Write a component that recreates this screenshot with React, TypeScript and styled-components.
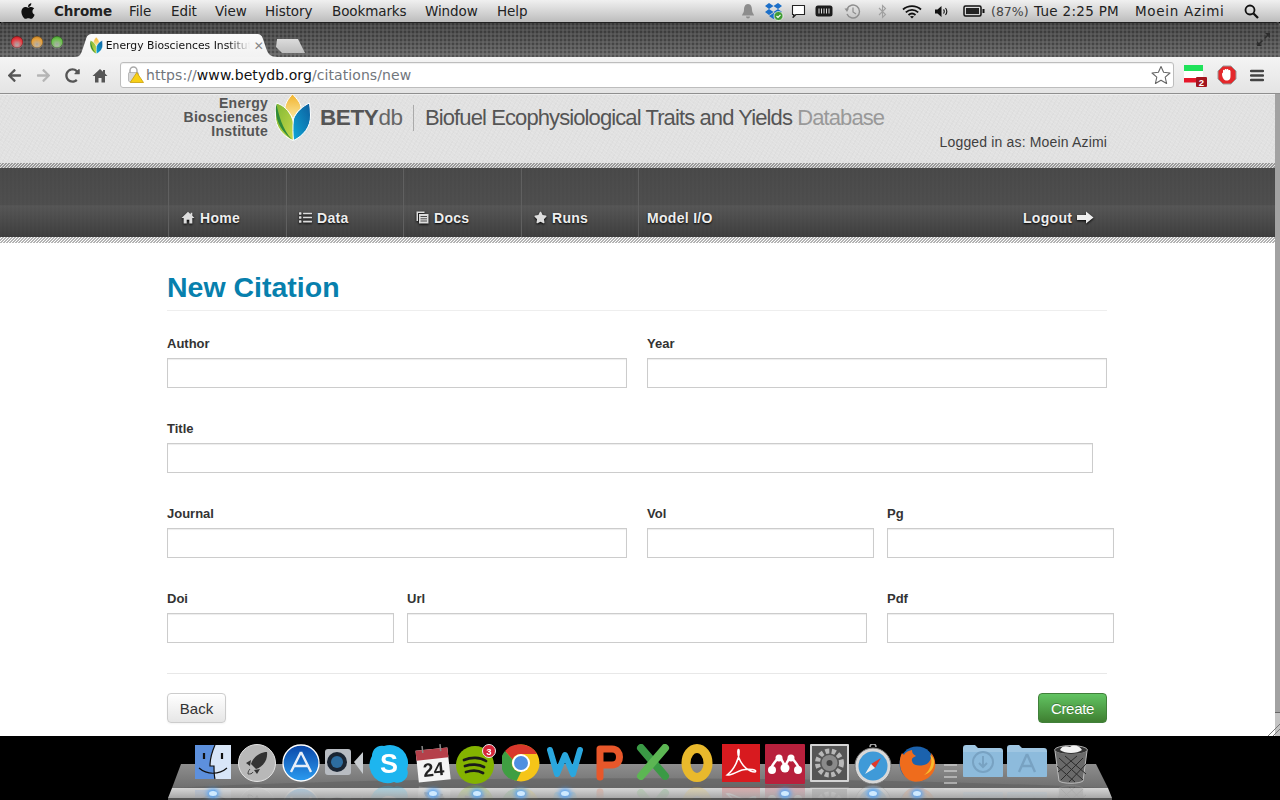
import React from "react";
import styled, { createGlobalStyle } from "styled-components";
import { FaApple, FaList, FaStar, FaArrowLeft, FaArrowRight, FaRedoAlt } from "react-icons/fa";

const Global = createGlobalStyle`
  html, body { margin: 0; padding: 0; width: 1280px; height: 800px; overflow: hidden; background: #000; }
  * { box-sizing: border-box; }
`;

const Screen = styled.div`
  width: 1280px; height: 800px; display: flex; flex-direction: column; overflow: hidden; background: #000;
  font-family: "Liberation Sans", Arial, sans-serif;
`;

const MenuBar = styled.div`
  height: 22px; flex: none; display: flex; align-items: center; padding-left: 19px;
  background: linear-gradient(#f0f0f0, #dcdcdc 40%, #bcbcbc);
  font-family: "DejaVu Sans", sans-serif; font-size: 13.5px; color: #222; letter-spacing: -0.1px;
`;
const AppleSlot = styled.span`width: 35px; height: 22px; display: flex; align-items: center; font-size: 18px; color: #111; flex: none;`;
const MenuItem = styled.span<{ $bold?: boolean; $w: number }>`
  width: ${p => p.$w}px; flex: none; font-weight: ${p => (p.$bold ? 700 : 400)}; white-space: nowrap;
`;
const Status = styled.div`margin-left: auto; display: flex; align-items: center; height: 22px; padding-right: 19px;`;
const StatusSlot = styled.span<{ $w: number }>`width: ${p => p.$w}px; flex: none; display: flex; justify-content: center; align-items: center;`;
const StatusText = styled.span<{ $w: number; $light?: boolean; $track: number }>`
  width: ${p => p.$w}px; flex: none; white-space: nowrap; font-size: ${p => (p.$light ? 12.5 : 13.5)}px; color: ${p => (p.$light ? "#444" : "#222")};
  letter-spacing: ${p => p.$track}px;
`;

const Browser = styled.div`
  height: 714px; flex: none; display: flex; flex-direction: column; overflow: hidden; border-radius: 4px 4px 0 0; background: #fff;
  position: relative;
`;
const TabStrip = styled.div`
  height: 35px; flex: none; display: flex; align-items: flex-end; position: relative;
  border-top: 1px solid #222;
  background:
    radial-gradient(circle at 1px 1px, rgba(0,0,0,.24) .8px, transparent 1.1px) 0 0 / 4px 4px,
    radial-gradient(circle at 3px 3px, rgba(255,255,255,.06) .8px, transparent 1.1px) 0 0 / 4px 4px,
    linear-gradient(#484848, #5a5a5a 60%, #6c6c6c);
`;
const Lights = styled.div`display: flex; gap: 8px; padding: 0 0 9px 11px; width: 80px; flex: none; align-self: flex-end;`;
const Light = styled.span<{ $c: string; $d: string }>`
  width: 12px; height: 12px; border-radius: 50%; flex: none;
  background: radial-gradient(circle at 50% 72%, #fff8 0, ${p => p.$c} 55%, ${p => p.$d} 100%);
  box-shadow: inset 0 0 0 .5px #0006, 0 1px 0 #fff3;
`;
const Tab = styled.div`
  width: 203px; height: 23px; flex: none; display: flex; align-items: center; padding: 0 0 0 15px; margin-left: -5px;
  background: linear-gradient(#fbfbfb, #f2f2f2);
  clip-path: path("M0 23 C5 23 6 20 8 14 L11 5 C12 2 13 0 18 0 L181 0 C186 0 187 2 188 5 L191 14 C193 20 195 23 203 23 Z");
  font-family: "DejaVu Sans", sans-serif; font-size: 10.8px; color: #111;
`;
const TabTitle = styled.span`
  width: 144px; margin-left: 3px; overflow: hidden; white-space: nowrap; flex: none;
  -webkit-mask-image: linear-gradient(90deg, #000 85%, transparent);
`;
const TabClose = styled.span`margin-left: 4px; font-size: 12px; color: #888; font-weight: 700;`;
const NewTab = styled.div`
  width: 31px; height: 14px; margin: 0 0 4px -4px; flex: none;
  background: linear-gradient(#dcdcdc, #bdbdbd);
  clip-path: polygon(3px 0, 24px 0, 31px 14px, 8px 14px, 2px 8px);
`;
const FullScreen = styled.span`margin-left: auto; align-self: flex-start; padding: 9px 9px 0 0; display: flex;`;

const Toolbar = styled.div`
  height: 37px; flex: none; display: flex; align-items: center;
  background: linear-gradient(#f4f4f4, #e4e4e4);
  border-bottom: 1px solid #8f8f8f;
`;
const ToolButton = styled.span<{ $w: number; $c?: string }>`
  width: ${p => p.$w}px; flex: none; display: flex; justify-content: center; color: ${p => p.$c || "#555"}; font-size: 15px;
`;
const Omnibox = styled.div`
  width: 1054px; height: 26px; flex: none; display: flex; align-items: center; background: #fff; border: 1px solid #bdbdbd; border-radius: 3px;
  box-shadow: inset 0 1px 1px #0001; padding: 0 1px 0 6px; margin-left: 6px;
  font-family: "DejaVu Sans", sans-serif; font-size: 14px;
`;
const Url = styled.span`margin-left: 2px; color: #71767c; white-space: nowrap; letter-spacing: 0.08px;`;
const UrlHost = styled.span`color: #111;`;
const StarSlot = styled.span`margin-left: auto; width: 21px; display: flex;`;

const Page = styled.div`flex: 1; display: flex; flex-direction: column; min-height: 0; background: #fff; position: relative;`;
const Header = styled.header`
  height: 74px; flex: none; position: relative;
  background:
    repeating-linear-gradient(37deg, rgba(255,255,255,.12) 0 1px, transparent 1px 3px),
    repeating-linear-gradient(-61deg, rgba(0,0,0,.018) 0 1px, transparent 1px 4px),
    #e1e1e1;
  border-top: 1px solid #eee;
`;
const HeaderInner = styled.div`display: flex; align-items: flex-start; padding-left: 167px; height: 68px;`;
const Eb = styled.div`
  width: 101px; flex: none; text-align: right; font-weight: 700; font-size: 14px; line-height: 14px; color: #555; padding-top: 1px; letter-spacing: 0.25px;
`;
const LogoSlot = styled.span`margin: -2px 0 0 7px; width: 36px; height: 48px; flex: none; display: flex;`;
const Brand = styled.div`
  margin-left: 9px; margin-top: 10px; display: flex; align-items: center; height: 26px; white-space: nowrap; font-size: 22px; letter-spacing: -0.9px; color: #555;
`;
const BrandName = styled.span`font-size: 22.5px; letter-spacing: -0.4px; width: 82px; flex: none;`;
const BrandStrong = styled.b`font-weight: 700;`;
const BrandLight = styled.span`color: #666; font-weight: 400;`;
const BrandRule = styled.span`width: 1px; height: 26px; background: #aaa; margin: 0 11px; flex: none;`;
const BrandMuted = styled.span`color: #999;`;
const Logged = styled.div`
  position: absolute; right: 173px; top: 39px; font-size: 14px; letter-spacing: .16px; color: #3f3f3f; white-space: nowrap;
`;
const Hatch = styled.div<{ $h: number; $bg: string; $fg: string }>`
  height: ${p => p.$h}px; flex: none;
  background: repeating-linear-gradient(135deg, ${p => p.$fg} 0 1.0607px, ${p => p.$bg} 1.0607px 2.1213px);
`;
const Nav = styled.nav`
  height: 69px; flex: none; display: flex; align-items: flex-end; padding-left: 168px;
  background:
    repeating-linear-gradient(90deg, rgba(255,255,255,.012) 0 2px, transparent 2px 4px),
    linear-gradient(#484848 0, #4d4d4d 54%, #555 54.5%, #3d3d3d 100%);
`;
const NavItem = styled.a<{ $w: number; $pad: number; $ruled?: boolean }>`
  width: ${p => p.$w}px; height: 69px; flex: none; display: flex; align-items: flex-end; gap: 5px; padding: 0 0 11px ${p => p.$pad}px;
  border-left: ${p => (p.$ruled ? "1px solid #606060" : "none")};
  color: #eee; font-weight: 700; font-size: 14px; line-height: 16px; letter-spacing: .3px; text-shadow: 0 1px 2px #000; white-space: nowrap;
  svg { margin-bottom: 2px; filter: drop-shadow(0 1px 1px #000); color: #ddd; flex: none; }
`;
const Main = styled.main`flex: 1; padding: 27px 0 0 167px; min-height: 0;`;
const Title = styled.h1`
  margin: 0; width: 940px; height: 41px; border-bottom: 1px solid #eee; font-size: 28.5px; line-height: 34px; font-weight: 700; color: #0780ad;
`;
const Form = styled.form`margin-top: 22px; width: 940px;`;
const Row = styled.div`display: flex; margin-bottom: 30px;`;
const Field = styled.label<{ $w: number; $right: number }>`
  width: ${p => p.$w}px; margin-right: ${p => p.$right}px; flex: none; display: block;
`;
const FieldName = styled.span`display: block; height: 25px; font-size: 13px; line-height: 22px; font-weight: 700; color: #333;`;
const Input = styled.input`
  display: block; width: 100%; height: 30px; border: 1px solid #ccc; border-radius: 0; background: #fff; padding: 4px 6px; margin: 0;
  box-shadow: inset 0 1px 1px rgba(0,0,0,.075); outline: none;
`;
const Rule = styled.hr`margin: 0 0 19px; border: 0; border-top: 1px solid #e8e8e8; width: 940px;`;
const Actions = styled.div`display: flex; justify-content: space-between; width: 940px;`;
const Back = styled.button`
  width: 59px; height: 30px; border: 1px solid #ccc; border-radius: 4px; background: linear-gradient(#fff, #e6e6e6);
  font: 15px "Liberation Sans", Arial, sans-serif; color: #333; padding: 0; box-shadow: inset 0 1px 0 #fff, 0 1px 2px #0000000d;
`;
const Create = styled.button`
  width: 69px; height: 30px; border: 1px solid #41803a; border-radius: 4px; background: linear-gradient(#62c462, #3f7f31);
  font: 15px "Liberation Sans", Arial, sans-serif; color: #fff; padding: 0; text-shadow: 0 -1px 0 #0004; letter-spacing: -.3px;
`;
const Gutter = styled.div`
  position: absolute; top: 0; right: 0; bottom: 0; width: 5px; background: linear-gradient(#a2a2a2 0, #a2a2a2 618px, #666 618px, #666 619px, #c4c4c4 619px);
`;
const Grip = styled.svg`position: absolute; right: 0; bottom: 0;`;

const Dock = styled.div`height: 64px; flex: none; position: relative; background: #000; overflow: hidden;`;
const Shelf = styled.svg`position: absolute; left: 0; top: 0;`;
const DockRow = styled.div`position: relative; display: flex; padding: 8px 0 0 191px; align-items: flex-start;`;
const DockSlot = styled.div<{ $running?: boolean }>`
  width: 44px; height: 40px; flex: none; display: flex; justify-content: center; position: relative;
  -webkit-box-reflect: below 1px linear-gradient(transparent 62%, rgba(255,255,255,.28));
  &::after {
    content: ""; display: ${p => (p.$running ? "block" : "none")}; position: absolute; left: 18px; top: 47px; width: 8px; height: 5px; border-radius: 50%;
    background: #cfeaff; box-shadow: 0 0 5px 2px #4aa3ff;
  }
`;
const DockGap = styled.div`width: 22px; height: 30px; flex: none; margin-top: 20px; display: flex; flex-direction: column; gap: 4px; align-items: center;
  span { width: 13px; height: 2px; background: #d5d5d5; opacity: .6; }
`;

const Leaf = ({ size }: { size: number }) => (
  <svg width={size * 0.75} height={size} viewBox="0 0 36 48">
    <defs>
      <linearGradient id="ly" x1="0" y1="0" x2="0" y2="1"><stop offset="0" stopColor="#f1b22c" /><stop offset="1" stopColor="#fbe9a0" /></linearGradient>
      <linearGradient id="lb" x1="1" y1="0" x2="0" y2="1"><stop offset="0" stopColor="#0d5d9d" /><stop offset="1" stopColor="#0ea8d8" /></linearGradient>
      <linearGradient id="lg" x1="0" y1="0" x2="1" y2="1"><stop offset="0" stopColor="#7fb734" /><stop offset="1" stopColor="#c8d94a" /></linearGradient>
    </defs>
    <path d="M17.500 1C13 6 10 11 10 15 13 18 16 22 18 26 20 22 23 18 26 15 26 10 22 6 17.500 1Z" fill="url(#ly)" stroke="#fff" strokeWidth="1" />
    <path d="M1.300 10C8 12 14 17 17.500 26 20 34 19 42 18 47.500 8 43 0 34 .5 22 .5 18 1 14 1.300 10Z" fill="url(#lg)" stroke="#fff" strokeWidth="1" />
    <path d="M1.300 11C0 20 1 34 17 46.500 7 36 4 22 1.300 11Z" fill="#2f8a3a" />
    <path d="M34.500 10C28 13 21 19 18.500 26 17.500 34 18 42 18.500 47.500 28 43 36 34 35.500 22 35.500 18 35 14 34.500 10Z" fill="url(#lb)" stroke="#fff" strokeWidth="1" />
  </svg>
);

const BellIcon = () => (<svg width="14" height="16" viewBox="0 0 14 16"><path d="M7 1C4 1 3 4 3 7 3 10 1 11 1 12.500L13 12.500C13 11 11 10 11 7 11 4 10 1 7 1ZM5 13.500C5 16 9 16 9 13.500Z" fill="#8d8d8d" /></svg>);
const DropboxIcon = () => (<svg width="20" height="19" viewBox="0 0 20 19"><path d="M5 1 9.500 4 5 7 1 4ZM14 1 18 4 14 7 9.500 4ZM5 7 9.500 10 5 13 1 10ZM14 7 18 10 14 13 9.500 10ZM5 14 9.500 11 14 14 9.500 17Z" fill="#1b6fc9" /><circle cx="14.500" cy="14" r="4.500" fill="#3f9b34" stroke="#fff" strokeWidth=".7" /><path d="M12.500 14 14 15.500 16.500 12.800" fill="none" stroke="#fff" strokeWidth="1.200" /></svg>);
const ChatIcon = () => (<svg width="15" height="15" viewBox="0 0 15 15"><path d="M1.500 1.500H13.500V10.500H5L2 13.500 3 10.500H1.500Z" fill="#fff" stroke="#222" strokeWidth="1.100" strokeLinejoin="round" /></svg>);
const RamIcon = () => (<svg width="18" height="12" viewBox="0 0 18 12"><rect x=".5" y=".5" width="17" height="11" rx="2.500" fill="#1c1c1c" /><path d="M4 3.500V8.500M6.500 3.500V8.500M9 3.500V8.500M11.500 3.500V8.500M14 3.500V8.500" stroke="#ddd" /></svg>);
const ClockIcon = () => (<svg width="17" height="17" viewBox="0 0 17 17"><path d="M3 6A6.500 6.500 0 1 1 3 11" fill="none" stroke="#8e8e8e" strokeWidth="1.400" /><path d="M.5 5.500H5L3 9Z" fill="#8e8e8e" /><path d="M9 4.500V9L12 11" fill="none" stroke="#8e8e8e" strokeWidth="1.200" /></svg>);
const BluetoothIcon = () => (<svg width="9" height="15" viewBox="0 0 9 15"><path d="M1 4 7.500 10.500 4.500 13.500V1.500L7.500 4.500 1 11" fill="none" stroke="#a0a0a0" strokeWidth="1.100" /></svg>);
const WifiIcon = () => (<svg width="20" height="15" viewBox="0 0 20 15"><path d="M1 5.500C6 1 14 1 19 5.500M3.800 8.300C7.500 5 12.500 5 16.200 8.300M6.500 11C8.500 9.300 11.500 9.300 13.500 11" fill="none" stroke="#111" strokeWidth="1.800" /><path d="M10 14.500 8 12.500C9 11.800 11 11.800 12 12.500Z" fill="#111" /></svg>);
const VolumeIcon = () => (<svg width="15" height="13" viewBox="0 0 15 13"><path d="M1 4.500H3.500L7.500 1V12L3.500 8.500H1Z" fill="#111" /><path d="M9.500 4.500C10.500 5.500 10.500 7.500 9.500 8.500M11.500 3C13 5 13 8 11.500 10" fill="none" stroke="#111" strokeWidth="1.100" /></svg>);
const BatteryIcon = () => (<svg width="22" height="12" viewBox="0 0 22 12"><rect x="1" y="1" width="17" height="10" rx="1.500" fill="none" stroke="#111" strokeWidth="1.500" /><rect x="3" y="3" width="13" height="6" fill="#222" /><rect x="19.500" y="4" width="2" height="4" fill="#111" /></svg>);
const SearchIcon = () => (<svg width="15" height="15" viewBox="0 0 15 15"><circle cx="6" cy="6" r="4.500" fill="none" stroke="#111" strokeWidth="1.800" /><path d="M9.500 9.500 14 14" stroke="#111" strokeWidth="2.300" /></svg>);
const ExpandIcon = () => (<svg width="15" height="15" viewBox="0 0 15 15"><path d="M9 1H14V6ZM1 9V14H6Z" fill="#2d2d2d" /><path d="M13 2 8.500 6.500M2 13 6.500 8.500" stroke="#2d2d2d" strokeWidth="1.500" /></svg>);
const HomeGlyph = ({ w, h }: { w: number; h: number }) => (<svg width={w} height={h} viewBox="0 0 16 15"><path d="M8 1 .5 8H3V14.500H6.500V10H9.500V14.500H13V8H15.500L13 5.600V2H11V3.800Z" fill="currentColor" /></svg>);
const DocsGlyph = () => (<svg width="13" height="13" viewBox="0 0 13 13"><path d="M.5 .5H8.500V2H2V10H.5Z" fill="currentColor" /><rect x="3" y="3" width="9.500" height="9.500" fill="currentColor" /><path d="M4.500 5.500H11M4.500 7.800H11M4.500 10H11" stroke="#4a4a4a" /></svg>);
const StarOutline = () => (<svg width="20" height="20" viewBox="0 0 20 20"><path d="M10 1.500 12.600 7.300 19 8 14.200 12.200 15.600 18.500 10 15.200 4.400 18.500 5.800 12.200 1 8 7.400 7.300Z" fill="#fff" stroke="#666" strokeWidth="1.100" strokeLinejoin="round" /></svg>);
const Lock = () => (<svg width="17" height="18" viewBox="0 0 17 18"><path d="M3 7V4.500A3.500 3.500 0 0 1 10 4.500V7" fill="none" stroke="#aaa" strokeWidth="1.500" /><rect x="1.500" y="6.500" width="10" height="9" rx="1" fill="#d8d8d8" stroke="#999" strokeWidth=".6" /><path d="M9.800 6.500 16.500 16.500H3.200Z" fill="#f7cf16" stroke="#c99e08" strokeWidth=".8" strokeLinejoin="round" /></svg>);
const FlagExt = () => (<svg width="24" height="26" viewBox="0 0 24 26"><rect x="1" y="3" width="19" height="6" fill="#1fe25a" /><rect x="1" y="9" width="19" height="7" fill="#fff" /><rect x="1" y="16" width="19" height="4.500" fill="#e6162a" /><rect x="13" y="15" width="11" height="10" rx="1" fill="#a3141f" /><text x="18.500" y="23.500" textAnchor="middle" fontFamily="Liberation Sans" fontWeight="700" fontSize="9.500" fill="#fff">2</text></svg>);
const StopExt = () => (<svg width="20" height="20" viewBox="0 0 20 20"><path d="M6 1H14L19 6V14L14 19H6L1 14V6Z" fill="#e4282b" stroke="#9a9a9a" /><path d="M6 13C4.500 10 5 7 6 8V5.500C6 4.500 7.500 4.500 7.500 5.500 7.500 3.500 9.500 3.500 9.500 5 9.500 3.500 11.500 3.500 11.500 5.300 12.500 4.500 13.500 5 13.500 6.500V11C13.500 14.500 12 15.500 10 15.500 8 15.500 7 15 6 13Z" fill="#fff" /></svg>);
const MenuExt = () => (<svg width="14" height="13" viewBox="0 0 14 13"><path d="M1 2H13M1 6.500H13M1 11H13" stroke="#444" strokeWidth="2.400" strokeLinecap="round" /></svg>);
const LogoutArrow = () => (<svg width="17" height="13" viewBox="0 0 17 13"><path d="M0 4H9V.5L16.500 6.500 9 12.500V9H0Z" fill="#eee" /></svg>);

const Finder = () => (<svg width="36" height="36" viewBox="0 0 36 36"><rect y="1" width="36" height="34" fill="#d8e6f8" /><path d="M0 1H20C16 10 15 16 15 22H19C19 27 19 31 20 35H0Z" fill="#5d90dd" /><path d="M20 1C16 10 15 16 15 22H19C19 27 19 31 20 35" fill="none" stroke="#111" strokeWidth="1.200" /><path d="M4 24C12 31 24 31 32 24" fill="none" stroke="#111" strokeWidth="1.200" /><path d="M9 9V15M27 9V15" stroke="#111" strokeWidth="2.200" /></svg>);
const Rocket = () => (<svg width="38" height="38" viewBox="0 0 38 38"><circle cx="19" cy="19" r="18.500" fill="#b8b8b8" stroke="#e4e4e4" /><path d="M29 8C22 8 15 13 13 20L18 25C25 23 30 16 29 8Z" fill="#333" /><path d="M13 16 8 19 12 22ZM22 25 19 30 16 26Z" fill="#333" /><path d="M12 25C10 27 10 29 10 30 12 30 14 30 15 28" fill="none" stroke="#444" /></svg>);
const AppStore = () => (<svg width="38" height="38" viewBox="0 0 38 38"><defs><linearGradient id="as" x1="0" y1="0" x2="0" y2="1"><stop offset="0" stopColor="#0a46a8" /><stop offset="1" stopColor="#2b9cf0" /></linearGradient></defs><circle cx="19" cy="19" r="18" fill="url(#as)" stroke="#fff" strokeWidth="1.300" /><path d="M19 8 9 28M19 8 29 28M11 22H27" stroke="#e8eef8" strokeWidth="2.400" fill="none" /></svg>);
const FaceTime = () => (<svg width="40" height="36" viewBox="0 0 40 36"><rect y="5" width="26" height="26" rx="3" fill="#b8bcc2" /><circle cx="12" cy="18" r="10" fill="#1a2533" /><circle cx="12" cy="18" r="6" fill="#2d6da0" /><path d="M29 18 38 8V30Z" fill="#c8ccd0" /></svg>);
const Skype = () => (<svg width="40" height="40" viewBox="0 0 40 40"><path d="M3 12A10 10 0 0 1 15 2 18 18 0 0 1 38 25 10 10 0 0 1 25 38 18 18 0 0 1 2 14Z" fill="#1db5ef" /><text x="20" y="29" textAnchor="middle" fontFamily="Liberation Sans" fontWeight="700" fontSize="27" fill="#fff">S</text></svg>);
const Calendar = () => (<svg width="38" height="40" viewBox="0 0 38 40"><g transform="rotate(-6 19 20)"><rect x="3" y="5" width="32" height="32" fill="#f4f4f4" /><rect x="3" y="5" width="32" height="10" fill="#b5404a" /><path d="M10 1V8M28 1V8" stroke="#888" strokeWidth="1.500" /><text x="19" y="32" textAnchor="middle" fontFamily="Liberation Sans" fontWeight="700" fontSize="19" fill="#222">24</text></g></svg>);
const Spotify = () => (<svg width="42" height="40" viewBox="0 0 42 40"><circle cx="19" cy="21" r="19" fill="#84b300" /><path d="M8 16C15 13 24 13 30 17M9 22C15 20 23 20 28 23M10 28C16 26 22 26 27 29" fill="none" stroke="#1a1a1a" strokeWidth="2.700" strokeLinecap="round" /><circle cx="33" cy="7" r="6.500" fill="#d7263a" stroke="#eee" /><text x="33" y="10.500" textAnchor="middle" fontFamily="Liberation Sans" fontWeight="700" fontSize="9.500" fill="#fff">3</text></svg>);
const Chrome = () => (<svg width="38" height="38" viewBox="0 0 38 38"><circle cx="19" cy="19" r="18.500" fill="#f5c518" /><path d="M19 .5A18.500 18.500 0 0 1 35 10H19A9 9 0 0 0 10.500 15.500L3 7A18.500 18.500 0 0 1 19 .5Z" fill="#d9372b" /><path d="M3 7 10.500 15.500A9 9 0 0 0 19 28L14.500 37A18.500 18.500 0 0 1 3 7Z" fill="#3f9e42" /><circle cx="19" cy="19" r="9" fill="#fff" /><circle cx="19" cy="19" r="7" fill="#4f8fe0" /></svg>);
const WordIcon = () => (<svg width="38" height="36" viewBox="0 0 38 36"><path d="M4 6 11 30 19 11 27 30 34 6" fill="none" stroke="#2aa7de" strokeWidth="6" strokeLinejoin="round" strokeLinecap="round" /></svg>);
const PptIcon = () => (<svg width="30" height="38" viewBox="0 0 30 38"><path d="M6 5V33M6 5H18C28 5 28 21 18 21H6" fill="none" stroke="#e8572a" strokeWidth="7" strokeLinecap="round" /></svg>);
const ExcelIcon = () => (<svg width="34" height="36" viewBox="0 0 34 36"><path d="M5 4 29 32" stroke="#3a9a45" strokeWidth="8" strokeLinecap="round" /><path d="M29 4 5 32" stroke="#5cb653" strokeWidth="8" strokeLinecap="round" /></svg>);
const OutlookIcon = () => (<svg width="32" height="38" viewBox="0 0 32 38"><ellipse cx="16" cy="19" rx="11" ry="14.500" fill="none" stroke="#e9b92c" strokeWidth="9" /></svg>);
const Acrobat = () => (<svg width="38" height="38" viewBox="0 0 38 38"><rect width="38" height="38" fill="#d81a1f" /><path d="M5 31C12 26 18 14 17 6 16 4 15 8 17 14 20 22 27 28 33 28 36 26 28 24 20 26 14 28 8 32 5 31Z" fill="none" stroke="#fff" strokeWidth="1.500" /></svg>);
const Mendeley = () => (<svg width="40" height="40" viewBox="0 0 40 40"><rect width="40" height="40" rx="1" fill="#b8203c" /><path d="M5 26C9 18 13 14 15 13L20 22 25 13C27 14 31 18 35 26" fill="none" stroke="#fff" strokeWidth="2.500" /><circle cx="7" cy="26" r="4" fill="#fff" /><circle cx="33" cy="26" r="4" fill="#fff" /><circle cx="20" cy="24" r="4.500" fill="#fff" /><circle cx="14" cy="14" r="3.500" fill="#fff" /><circle cx="26" cy="14" r="3.500" fill="#fff" /></svg>);
const Settings = () => (<svg width="39" height="38" viewBox="0 0 39 38"><rect width="39" height="38" rx="1" fill="#d4d4d4" /><rect x="2" y="2" width="35" height="34" fill="#555" /><circle cx="19.500" cy="19" r="12" fill="none" stroke="#b8b8b8" strokeWidth="5" strokeDasharray="4 2.500" /><circle cx="19.500" cy="19" r="8" fill="#8a8a8a" /><circle cx="19.500" cy="19" r="3" fill="#444" /></svg>);
const Safari = () => (<svg width="38" height="40" viewBox="0 0 38 40"><circle cx="19" cy="22" r="18" fill="#d8d8d8" stroke="#777" /><circle cx="19" cy="22" r="14.500" fill="#3f9ad8" /><path d="M27 14 21 24 17 20Z" fill="#e2392a" /><path d="M11 30 21 24 17 20Z" fill="#eee" /><path d="M16 3A3 3 0 0 1 22 3" fill="none" stroke="#aaa" strokeWidth="1.500" /></svg>);
const Firefox = () => (<svg width="40" height="40" viewBox="0 0 40 40"><circle cx="20" cy="20" r="17.500" fill="#1b62ad" /><path d="M5 9C1 16 2 30 12 36 22 41 35 35 38 24 39 17 37 12 34 9 35 15 32 20 27 21 22 22 16 22 15 17 14 14 17 13 19 12 16 10 15 9 15 6 10 7 8 9 7 11 6 10 5 9 5 9Z" fill="#ef6c1c" /><path d="M33 11C36 17 34 26 27 31 33 29 38 24 37 16 36 14 35 12 33 11Z" fill="#f8ba2c" /></svg>);
const FolderIcon = ({ kind }: { kind: "down" | "apps" }) => (
  <svg width="42" height="34" viewBox="0 0 42 34">
    <path d="M1 4C1 2 2 1 4 1H13L16 4H38C40 4 41 5 41 7V31C41 33 40 33 38 33H4C2 33 1 33 1 31Z" fill="#9fc6e2" />
    <path d="M1 8H41V31C41 33 40 33 38 33H4C2 33 1 33 1 31Z" fill="#8dbbdc" />
    {kind === "down"
      ? <g fill="none" stroke="#78a2c2" strokeWidth="2"><circle cx="21" cy="18" r="10" /><path d="M21 12V22M17 19 21 23 25 19" /></g>
      : <path d="M21 10 13 28M21 10 29 28M15 22H27" fill="none" stroke="#78a2c2" strokeWidth="2.400" />}
  </svg>
);
const Trash = () => (<svg width="36" height="40" viewBox="0 0 36 40"><ellipse cx="18" cy="6" rx="16.500" ry="4.500" fill="#333" stroke="#aaa" /><path d="M7 6C9 1 14 2 17 3 21 0 27 2 29 6 24 10 12 10 7 6Z" fill="#f2f2f2" /><path d="M2 7 6 37C10 40 26 40 30 37L34 7C28 11 8 11 2 7Z" fill="#6a6a6a" /><path d="M2 7 6 37C10 40 26 40 30 37L34 7" fill="none" stroke="#bbb" /><path d="M6 14 30 36M12 12 33 30M4 22 22 38M30 14 8 36M24 12 5 28M33 20 16 38" stroke="#2c2c2c" strokeWidth="1" /></svg>);

const dockApps: { key: string; node: React.ReactNode; running?: boolean }[] = [
  { key: "finder", node: <Finder />, running: true },
  { key: "rocket", node: <Rocket /> },
  { key: "store", node: <AppStore /> },
  { key: "facetime", node: <FaceTime /> },
  { key: "skype", node: <Skype /> },
  { key: "calendar", node: <Calendar />, running: true },
  { key: "spotify", node: <Spotify />, running: true },
  { key: "chrome", node: <Chrome />, running: true },
  { key: "word", node: <WordIcon />, running: true },
  { key: "ppt", node: <PptIcon /> },
  { key: "excel", node: <ExcelIcon /> },
  { key: "outlook", node: <OutlookIcon /> },
  { key: "acrobat", node: <Acrobat /> },
  { key: "mendeley", node: <Mendeley />, running: true },
  { key: "settings", node: <Settings /> },
  { key: "safari", node: <Safari />, running: true },
  { key: "firefox", node: <Firefox />, running: true },
];

const rows = [
  [{ n: "Author", w: 460, r: 20 }, { n: "Year", w: 460, r: 0 }],
  [{ n: "Title", w: 926, r: 0 }],
  [{ n: "Journal", w: 460, r: 20 }, { n: "Vol", w: 227, r: 13 }, { n: "Pg", w: 227, r: 0 }],
  [{ n: "Doi", w: 227, r: 13 }, { n: "Url", w: 460, r: 20 }, { n: "Pdf", w: 227, r: 0 }],
];

export default function App() {
  return (
    <Screen>
      <Global />
      <MenuBar>
        <AppleSlot><FaApple /></AppleSlot>
        <MenuItem $bold $w={75}>Chrome</MenuItem>
        <MenuItem $w={42}>File</MenuItem>
        <MenuItem $w={44}>Edit</MenuItem>
        <MenuItem $w={50}>View</MenuItem>
        <MenuItem $w={67}>History</MenuItem>
        <MenuItem $w={93}>Bookmarks</MenuItem>
        <MenuItem $w={72}>Window</MenuItem>
        <MenuItem $w={40}>Help</MenuItem>
        <Status>
          <StatusSlot $w={26}><BellIcon /></StatusSlot>
          <StatusSlot $w={25}><DropboxIcon /></StatusSlot>
          <StatusSlot $w={24}><ChatIcon /></StatusSlot>
          <StatusSlot $w={28}><RamIcon /></StatusSlot>
          <StatusSlot $w={29}><ClockIcon /></StatusSlot>
          <StatusSlot $w={30}><BluetoothIcon /></StatusSlot>
          <StatusSlot $w={30}><WifiIcon /></StatusSlot>
          <StatusSlot $w={29}><VolumeIcon /></StatusSlot>
          <StatusSlot $w={35}><BatteryIcon /></StatusSlot>
          <StatusText $light $w={43} $track={0}>(87%)</StatusText>
          <StatusText $w={101} $track={0.3}>Tue 2:25 PM</StatusText>
          <StatusText $w={106} $track={0.7}>Moein Azimi</StatusText>
          <StatusSlot $w={20}><SearchIcon /></StatusSlot>
        </Status>
      </MenuBar>
      <Browser>
        <TabStrip>
          <Lights>
            <Light $c="#e8363c" $d="#8a1216" />
            <Light $c="#e8a13a" $d="#95601a" />
            <Light $c="#6cc24c" $d="#2f7a22" />
          </Lights>
          <Tab>
            <Leaf size={17} />
            <TabTitle>Energy Biosciences Institute</TabTitle>
            <TabClose>✕</TabClose>
          </Tab>
          <NewTab />
          <FullScreen><ExpandIcon /></FullScreen>
        </TabStrip>
        <Toolbar>
          <ToolButton $w={29}><FaArrowLeft /></ToolButton>
          <ToolButton $w={29} $c="#b5b5b5"><FaArrowRight /></ToolButton>
          <ToolButton $w={28}><FaRedoAlt /></ToolButton>
          <ToolButton $w={28}><HomeGlyph w={16} h={15} /></ToolButton>
          <Omnibox>
            <Lock />
            <Url>https://<UrlHost>www.betydb.org</UrlHost>/citations/new</Url>
            <StarSlot><StarOutline /></StarSlot>
          </Omnibox>
          <ToolButton $w={42}><FlagExt /></ToolButton>
          <ToolButton $w={22}><StopExt /></ToolButton>
          <ToolButton $w={38}><MenuExt /></ToolButton>
        </Toolbar>
        <Page>
          <Header>
            <HeaderInner>
              <Eb>Energy<br />Biosciences<br />Institute</Eb>
              <LogoSlot><Leaf size={48} /></LogoSlot>
              <Brand>
                <BrandName><BrandStrong>BETY</BrandStrong><BrandLight>db</BrandLight></BrandName>
                <BrandRule />
                Biofuel Ecophysiological Traits and Yields&nbsp;<BrandMuted>Database</BrandMuted>
              </Brand>
            </HeaderInner>
            <Logged>Logged in as: Moein Azimi</Logged>
            <Hatch $h={5} $bg="#e2e2e2" $fg="#9a9a9a" />
          </Header>
          <Nav>
            <NavItem $w={118} $pad={12} $ruled><HomeGlyph w={14} h={13} />Home</NavItem>
            <NavItem $w={117} $pad={12} $ruled><FaList size={13} />Data</NavItem>
            <NavItem $w={118} $pad={12} $ruled><DocsGlyph />Docs</NavItem>
            <NavItem $w={117} $pad={12} $ruled><FaStar size={13} />Runs</NavItem>
            <NavItem $w={385} $pad={8} $ruled>Model I/O</NavItem>
            <NavItem $w={90} $pad={0}>Logout<LogoutArrow /></NavItem>
          </Nav>
          <Hatch $h={6} $bg="#ffffff" $fg="#b4b4b4" />
          <Main>
            <Title>New Citation</Title>
            <Form>
              {rows.map((row, i) => (
                <Row key={i}>
                  {row.map(f => (
                    <Field key={f.n} $w={f.w} $right={f.r}>
                      <FieldName>{f.n}</FieldName>
                      <Input type="text" />
                    </Field>
                  ))}
                </Row>
              ))}
              <Rule />
              <Actions>
                <Back type="button">Back</Back>
                <Create type="button">Create</Create>
              </Actions>
            </Form>
          </Main>
          <Gutter />
          <Grip width="14" height="14" viewBox="0 0 14 14">
            <path d="M2 14 14 2M7 14 14 7" stroke="#777" strokeWidth="1" />
          </Grip>
        </Page>
      </Browser>
      <Dock>
        <Shelf width="1280" height="64" viewBox="0 0 1280 64">
          <defs>
            <linearGradient id="shelfTop" x1="0" y1="0" x2="0" y2="1"><stop offset="0" stopColor="#8e8e8e" /><stop offset="1" stopColor="#6f6f6f" /></linearGradient>
            <linearGradient id="shelfFront" x1="0" y1="0" x2="0" y2="1"><stop offset="0" stopColor="#d6d6d6" /><stop offset="1" stopColor="#a8a8a8" /></linearGradient>
          </defs>
          <path d="M181 28H1096L1108 52H172Z" fill="url(#shelfTop)" />
          <path d="M172 52C400 40 800 38 1108 52Z" fill="#5f5f5f" opacity=".55" />
          <path d="M172 52H1108L1112 62H168Z" fill="url(#shelfFront)" />
          <rect x="168" y="62" width="944" height="2" fill="#555" />
        </Shelf>
        <DockRow>
          {dockApps.map(a => (
            <DockSlot key={a.key} $running={a.running}>{a.node}</DockSlot>
          ))}
          <DockGap><span /><span /><span /><span /><span /></DockGap>
          <DockSlot><FolderIcon kind="down" /></DockSlot>
          <DockSlot><FolderIcon kind="apps" /></DockSlot>
          <DockSlot><Trash /></DockSlot>
        </DockRow>
      </Dock>
    </Screen>
  );
}
